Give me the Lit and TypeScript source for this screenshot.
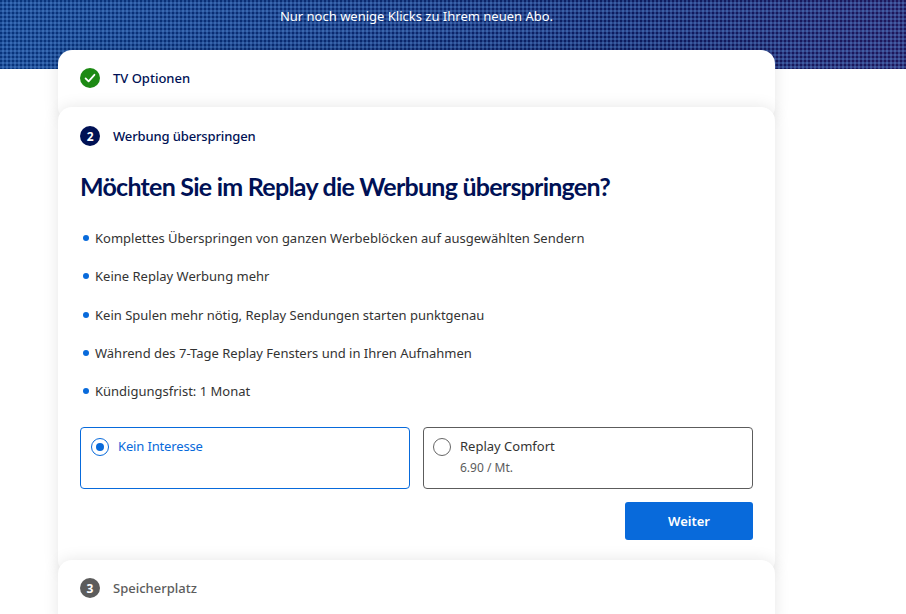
import { LitElement, html, css } from "lit";
import { customElement } from "lit/decorators.js";

@customElement("app-root")
export class AppRoot extends LitElement {
  static styles = css`
    :host {
      display: block;
      width: 906px;
      height: 614px;
      overflow: hidden;
      background: #fff;
      font-family: "Noto Sans", "Open Sans", sans-serif;
      color: #333;
      position: relative;
    }
    .banner {
      height: 69px;
      position: relative;
      background: linear-gradient(90deg, #08347c 0%, #0a2a70 35%, #0d1b5e 70%, #1e165a 100%);
      box-sizing: border-box;
      padding-top: 8px;
    }
    .banner::before {
      content: "";
      position: absolute;
      inset: 0;
      background-image:
        repeating-linear-gradient(90deg, transparent 0 2px, rgba(110, 170, 245, 0.27) 2px 4px),
        repeating-linear-gradient(180deg, transparent 0 2px, rgba(110, 170, 245, 0.27) 2px 4px);
    }
    .banner-text {
      position: relative;
      width: 717px;
      margin-left: 58px;
      text-align: center;
      color: #fff;
      font-size: 13px;
      line-height: 16px;
    }
    .stack {
      position: relative;
      width: 717px;
      margin: -19px 0 0 58px;
      display: flex;
      flex-direction: column;
    }
    .card {
      background: #fff;
      border-radius: 14px;
      box-shadow: 0 0 16px rgba(0, 0, 0, 0.1);
    }
    .card + .card {
      margin-top: -14px;
    }
    .head {
      display: flex;
      align-items: center;
      gap: 13px;
      padding: 0 22px;
      font-size: 13px;
      font-weight: 500;
      color: #001155;
    }
    .first .head {
      height: 56px;
    }
    .first {
      height: 71px;
    }
    .num {
      width: 20px;
      height: 20px;
      border-radius: 50%;
      background: #001155;
      color: #fff;
      font-size: 12px;
      font-weight: 700;
      display: flex;
      align-items: center;
      justify-content: center;
      flex: none;
    }
    .check {
      width: 20px;
      height: 20px;
      flex: none;
      display: block;
    }
    .active .head {
      height: 58px;
      letter-spacing: -0.01em;
    }
    .body {
      padding: 0 22px 34px;
    }
    h1 {
      margin: 0;
      font-family: "Lato", "Noto Sans", sans-serif;
      font-size: 25px;
      line-height: 34px;
      font-weight: 700;
      color: #001155;
      letter-spacing: -0.75px;
      padding-top: 4px;
    }
    ul {
      list-style: none;
      margin: 25px 0 0;
      padding: 0;
      display: flex;
      flex-direction: column;
      gap: 18.25px;
    }
    li {
      display: flex;
      align-items: center;
      gap: 9px;
      font-size: 13px;
      line-height: 20px;
      color: #333;
    }
    li::before {
      content: "";
      width: 6px;
      height: 6px;
      border-radius: 50%;
      background: #086adb;
      flex: none;
      margin-left: 3px;
      margin-right: -3px;
    }
    .options {
      display: grid;
      grid-template-columns: 1fr 1fr;
      gap: 13px;
      margin-top: 25.6px;
    }
    .opt {
      height: 62px;
      box-sizing: border-box;
      border: 1px solid #5c5c5c;
      border-radius: 4px;
      display: flex;
      gap: 9px;
      padding: 10px;
      font-size: 13px;
      line-height: 18px;
      color: #333;
    }
    .opt + .opt {
      padding-left: 9px;
    }
    .label {
      margin-top: -1px;
    }
    .opt.sel {
      border-color: #086adb;
      color: #086adb;
      letter-spacing: -0.15px;
    }
    .radio {
      width: 18px;
      height: 18px;
      border-radius: 50%;
      box-sizing: border-box;
      border: 1px solid #666;
      flex: none;
      display: flex;
      align-items: center;
      justify-content: center;
    }
    .sel .radio {
      border-color: #086adb;
    }
    .sel .radio::after {
      content: "";
      width: 8px;
      height: 8px;
      border-radius: 50%;
      background: #086adb;
    }
    .price {
      font-size: 12px;
      line-height: 18px;
      margin-top: 4px;
      color: #5c5c5c;
    }
    .actions {
      display: flex;
      justify-content: flex-end;
      margin-top: 13px;
    }
    button {
      width: 128px;
      height: 38px;
      border: 0;
      border-radius: 3px;
      background: #086adb;
      color: #fff;
      font: 600 13px "Noto Sans", "Open Sans", sans-serif;
    }
    .last .head {
      height: 57px;
      color: #5c5c5c;
    }
    .last .num {
      background: #5c5c5c;
    }
    .last {
      height: 70px;
    }
  `;

  render() {
    return html`
      <div class="banner"><div class="banner-text">Nur noch wenige Klicks zu Ihrem neuen Abo.</div></div>
      <div class="stack">
        <section class="card first">
          <div class="head">
            <svg class="check" viewBox="0 0 20 20" aria-hidden="true">
              <circle cx="10" cy="10" r="10" fill="#1d8a14"></circle>
              <path d="M5.6 10.4l3 3 5.8-6.6" fill="none" stroke="#fff" stroke-width="1.8" stroke-linecap="round" stroke-linejoin="round"></path>
            </svg>
            TV Optionen
          </div>
        </section>
        <section class="card active">
          <div class="head"><span class="num">2</span>Werbung überspringen</div>
          <div class="body">
            <h1>Möchten Sie im Replay die Werbung überspringen?</h1>
            <ul>
              <li>Komplettes Überspringen von ganzen Werbeblöcken auf ausgewählten Sendern</li>
              <li>Keine Replay Werbung mehr</li>
              <li>Kein Spulen mehr nötig, Replay Sendungen starten punktgenau</li>
              <li>Während des 7-Tage Replay Fensters und in Ihren Aufnahmen</li>
              <li>Kündigungsfrist: 1 Monat</li>
            </ul>
            <div class="options">
              <div class="opt sel"><span class="radio"></span><div class="label">Kein Interesse</div></div>
              <div class="opt"><span class="radio"></span><div class="label">Replay Comfort<div class="price">6.90 / Mt.</div></div></div>
            </div>
            <div class="actions"><button>Weiter</button></div>
          </div>
        </section>
        <section class="card last">
          <div class="head"><span class="num">3</span>Speicherplatz</div>
        </section>
      </div>
    `;
  }
}
